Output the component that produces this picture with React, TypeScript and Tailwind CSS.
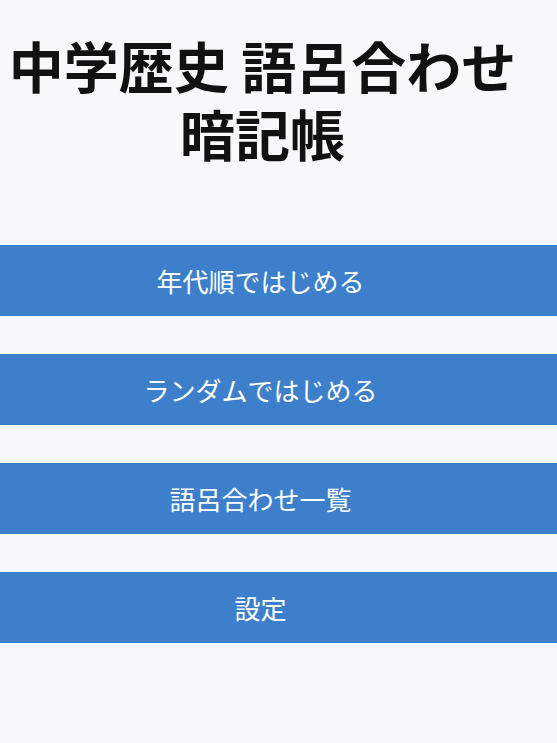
import React from "react";

const items = ["年代順ではじめる", "ランダムではじめる", "語呂合わせ一覧", "設定"];

export default function App() {
  return (
    <div
      className="min-h-[743px] w-full bg-[#f8f8fa] flex flex-col"
      style={{ fontFamily: '"Noto Sans CJK JP", "Noto Sans", sans-serif' }}
    >
      <h1 className="pt-[30px] pr-[32px] text-center text-[55px] leading-[68px] font-bold text-[#111111]">
        中学歴史 語呂合わせ
        <br />
        暗記帳
      </h1>
      <div className="mt-[79px] flex flex-col gap-[38px]">
        {items.map((t) => (
          <button
            key={t}
            className="h-[71px] w-full pr-[36px] bg-[#3e7fcb] text-white text-[26px] flex items-center justify-center"
          >
            {t}
          </button>
        ))}
      </div>
    </div>
  );
}
